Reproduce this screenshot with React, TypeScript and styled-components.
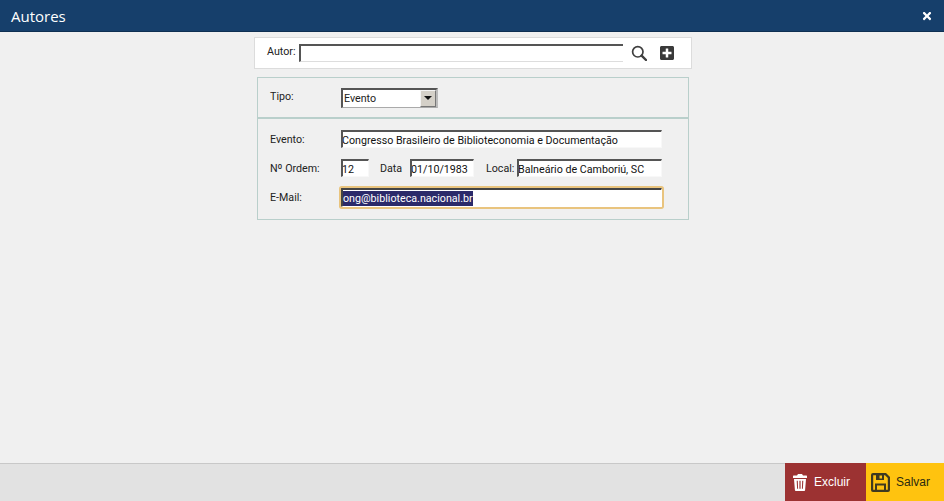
import React from "react";
import styled, { createGlobalStyle } from "styled-components";
import { FaPlusSquare, FaTimes } from "react-icons/fa";

const Global = createGlobalStyle`
  html, body { margin: 0; padding: 0; height: 100%; background: #f0f0f0; overflow: hidden; }
  #root { height: 100%; }
  * { box-sizing: border-box; }
`;

const Page = styled.div`
  width: 944px;
  height: 501px;
  display: flex;
  flex-direction: column;
  background: #f0f0f0;
  font-family: "Roboto", sans-serif;
  font-size: 10.7px;
  color: #222;
`;

const Header = styled.header`
  height: 32px;
  flex: none;
  background: #163f6b;
  border-bottom: 1px solid #0e2f52;
  display: flex;
  align-items: center;
  justify-content: space-between;
  padding: 0 11px;
  color: #fff;
`;

const Title = styled.h1`
  margin: 0;
  font: 400 15px "Open Sans", sans-serif;
`;

const Close = styled.span`
  display: flex;
  font-size: 12px;
  color: #fff;
`;

const Content = styled.main`
  flex: 1;
  display: flex;
  flex-direction: column;
  align-items: center;
  padding: 5px 0 0 2px;
`;

const SearchBar = styled.div`
  width: 438px;
  height: 32px;
  background: #fff;
  border: 1px solid #dcdcdc;
  display: flex;
  align-items: center;
  padding-left: 12px;
`;

const Field = styled.div<{ $w: number; $focus?: boolean; $open?: boolean; $ml?: number }>`
  width: ${(p) => p.$w}px;
  height: ${(p) => (p.$focus ? 19 : 18)}px;
  flex: none;
  margin-left: ${(p) => p.$ml ?? 0}px;
  background: #fff;
  border-style: solid;
  border-width: 2px 1px 1px 2px;
  border-color: #555 #f8f8f8 #f8f8f8 #555;
  ${(p) => p.$open && "border-right: none; border-bottom-color: #ddd;"}
  ${(p) =>
    p.$focus
      ? "box-shadow: 0 0 0 2px #e9c47e; border-radius: 1px; border-color: #444 #fff #fff #444;"
      : "text-indent: -1px;"}
  line-height: 17px;
  white-space: nowrap;
  overflow: hidden;
  color: #111;
`;

const Selected = styled.span`
  background: #2b2a6a;
  color: #fff;
  display: inline-block;
  line-height: 15px;
`;

const IconButton = styled.span<{ $size: number; $ml: number }>`
  display: flex;
  font-size: ${(p) => p.$size}px;
  margin-left: ${(p) => p.$ml}px;
  color: #3a3a3a;
`;

const Group = styled.section`
  width: 432px;
  margin-top: 8px;
  border: 1px solid #b9cfcb;
  display: flex;
  flex-direction: column;
`;

const TypeRow = styled.div`
  height: 41px;
  display: flex;
  align-items: center;
  padding: 0 12px;
  border-bottom: 2px solid #b9cfcb;
`;

const Rows = styled.div`
  height: 100px;
  display: flex;
  flex-direction: column;
  gap: 11px;
  padding: 11px 12px 0;
`;

const Row = styled.div`
  display: flex;
  align-items: center;
  height: 18px;
`;

const Label = styled.span<{ $w?: number; $ml?: number; $up?: number }>`
  ${(p) => p.$w && `width: ${p.$w}px;`}
  ${(p) => p.$ml && `margin-left: ${p.$ml}px;`}
  flex: none;
  margin-top: ${(p) => p.$up ?? 1}px;
`;

const Select = styled.div`
  width: 97px;
  height: 20px;
  border-style: solid;
  border-width: 2px 2px 1px 2px;
  border-color: #555 #bbb #aaa #555;
  background: #fff;
  display: flex;
  align-items: center;
  justify-content: space-between;
  padding-left: 1px;
`;

const Arrow = styled.span`
  width: 16px;
  height: 17px;
  background: #d4d0c8;
  border: 1px solid;
  border-color: #f4f4f4 #777 #777 #f4f4f4;
  display: flex;
  align-items: center;
  justify-content: center;
  &::after {
    content: "";
    border-style: solid;
    border-width: 4px 4px 0;
    border-color: #111 transparent transparent;
  }
`;

const Footer = styled.footer`
  height: 38px;
  flex: none;
  background: #e2e2e2;
  border-top: 1px solid #c8c8c8;
  display: flex;
  justify-content: flex-end;
`;

const ActionButton = styled.div<{ $bg: string; $fg: string; $w: number; $gap: number; $pl: number }>`
  width: ${(p) => p.$w}px;
  margin-top: -1px;
  background: ${(p) => p.$bg};
  color: ${(p) => p.$fg};
  display: flex;
  align-items: center;
  gap: ${(p) => p.$gap}px;
  padding-left: ${(p) => p.$pl}px;
  font: 12px "Liberation Sans", sans-serif;
`;

const SearchIcon = () => (
  <svg width="16" height="16" viewBox="0 0 16 16" fill="none" stroke="#3f3f3f">
    <circle cx="6.8" cy="6.8" r="5.2" strokeWidth="1.7" />
    <path d="M10.6 10.6 15 15" strokeWidth="2.4" strokeLinecap="round" />
  </svg>
);

const TrashIcon = () => (
  <svg width="14" height="17" viewBox="0 0 14 17" fill="#fff">
    <path d="M5 0h4l1 1.6h3.4a.6.6 0 0 1 .6.6V4H0V2.200a.6.6 0 0 1 .6-.6H4z" />
    <path
      fillRule="evenodd"
      d="M1 5h12l-.9 11a1 1 0 0 1-1 1H2.900a1 1 0 0 1-1-1zM3.700 6.800l.4 8h1l-.3-8zM6.400 6.800v8h1.200v-8zM9.200 6.800l-.3 8h1l.4-8z"
    />
  </svg>
);

const SaveIcon = () => (
  <svg width="19" height="19" viewBox="0 0 19 19" fill="#3f3a20">
    <path
      fillRule="evenodd"
      d="M2 0h13l4 4v13a2 2 0 0 1-2 2H2a2 2 0 0 1-2-2V2a2 2 0 0 1 2-2zM2.200 2.200v14.600h1.800V10.500h11v6.300h1.800V5l-2.800-2.800H13V7H5V2.200zM6 12.500v4.300h7v-4.300zM8.500 2.500v3h2.500v-3z"
    />
  </svg>
);

export default function App() {
  return (
    <Page>
      <Global />
      <Header>
        <Title>Autores</Title>
        <Close>
          <FaTimes />
        </Close>
      </Header>
      <Content>
        <SearchBar>
          <Label $w={32} $up={-3}>Autor:</Label>
          <Field $w={324} $open />
          <IconButton $size={15} $ml={8}>
            <SearchIcon />
          </IconButton>
          <IconButton $size={16} $ml={12}>
            <FaPlusSquare />
          </IconButton>
        </SearchBar>
        <Group>
          <TypeRow>
            <Label $w={71} $up={-3}>Tipo:</Label>
            <Select>
              Evento
              <Arrow />
            </Select>
          </TypeRow>
          <Rows>
            <Row>
              <Label $w={71}>Evento:</Label>
              <Field $w={321}>Congresso Brasileiro de Biblioteconomia e Documentação</Field>
            </Row>
            <Row>
              <Label $w={71}>Nº Ordem:</Label>
              <Field $w={28}>12</Field>
              <Label $ml={11} $w={30}>Data</Label>
              <Field $w={64}>01/10/1983</Field>
              <Label $ml={12} $w={31}>Local:</Label>
              <Field $w={145}>Balneário de Camboriú, SC</Field>
            </Row>
            <Row>
              <Label $w={71}>E-Mail:</Label>
              <Field $w={321} $focus>
                <Selected>ong@biblioteca.nacional.br</Selected>
              </Field>
            </Row>
          </Rows>
        </Group>
      </Content>
      <Footer>
        <ActionButton $bg="#9c3232" $fg="#fff" $w={81} $gap={7} $pl={8}>
          <TrashIcon />
          Excluir
        </ActionButton>
        <ActionButton $bg="#ffc30f" $fg="#2a2a10" $w={78} $gap={6} $pl={5}>
          <SaveIcon />
          Salvar
        </ActionButton>
      </Footer>
    </Page>
  );
}
